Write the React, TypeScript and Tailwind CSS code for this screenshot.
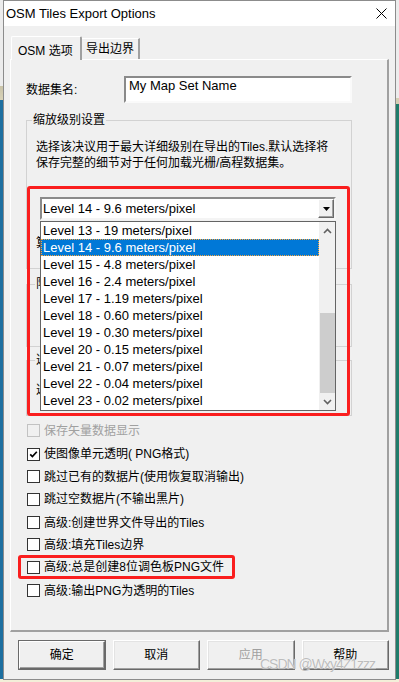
import React from "react";

const F = "font-['Liberation_Sans','Noto_Sans_CJK_SC',sans-serif]";

const levels = [
  "Level 13 - 19 meters/pixel",
  "Level 14 - 9.6 meters/pixel",
  "Level 15 - 4.8 meters/pixel",
  "Level 16 - 2.4 meters/pixel",
  "Level 17 - 1.19 meters/pixel",
  "Level 18 - 0.60 meters/pixel",
  "Level 19 - 0.30 meters/pixel",
  "Level 20 - 0.15 meters/pixel",
  "Level 21 - 0.07 meters/pixel",
  "Level 22 - 0.04 meters/pixel",
  "Level 23 - 0.02 meters/pixel",
];

const checks = [
  { label: "保存矢量数据显示", disabled: true, checked: false, h: "h-[23px]" },
  { label: "使图像单元透明( PNG格式)", disabled: false, checked: true, h: "h-[24px]" },
  { label: "跳过已有的数据片(使用恢复取消输出)", disabled: false, checked: false, h: "h-[21px]" },
  { label: "跳过空数据片(不输出黑片)", disabled: false, checked: false, h: "h-[24px]" },
  { label: "高级:创建世界文件导出的Tiles", disabled: false, checked: false, h: "h-[23px]" },
  { label: "高级:填充Tiles边界", disabled: false, checked: false, h: "h-[21px]" },
  { label: "高级:总是创建8位调色板PNG文件", disabled: false, checked: false, h: "h-[24px]" },
  { label: "高级:输出PNG为透明的Tiles", disabled: false, checked: false, h: "h-[23px]" },
];

function Chevron({ up }: { up: boolean }) {
  return (
    <svg width="9" height="6" viewBox="0 0 9 6">
      <polyline
        points={up ? "1,5 4.5,1.5 8,5" : "1,1 4.5,4.5 8,1"}
        fill="none"
        stroke="#606060"
        strokeWidth="1.6"
      />
    </svg>
  );
}

function Sliver({ ch }: { ch: string }) {
  return (
    <span className="block w-[4px] h-[16px] overflow-hidden text-[12px] leading-[16px] text-black">{ch}</span>
  );
}

function Button({ label, isDefault, disabled }: { label: string; isDefault?: boolean; disabled?: boolean }) {
  if (isDefault) {
    return (
      <div className="w-[88px] h-[30px] border border-[#6a6a6a]">
        <div className="w-full h-full border border-t-white border-l-white border-r-[#696969] border-b-[#696969] bg-[#f0f0f0] flex items-center justify-center shadow-[inset_-1px_-1px_0_#a0a0a0]">
          <span className="text-[12px] leading-[16px] text-black">{label}</span>
        </div>
      </div>
    );
  }
  return (
    <div className="w-[88px] h-[30px] border border-t-white border-l-white border-r-[#696969] border-b-[#696969] bg-[#f0f0f0] flex items-center justify-center shadow-[inset_-1px_-1px_0_#a0a0a0,inset_1px_1px_0_#e3e3e3]">
      <span className={"text-[12px] leading-[16px] " + (disabled ? "text-[#a0a0a0]" : "text-black")}>{label}</span>
    </div>
  );
}

export default function App() {
  return (
    <div className={"w-[399px] h-[682px] flex bg-[#f3efd9] " + F}>
      <div className="w-[3px] h-full bg-[linear-gradient(to_bottom,#ececec_0px,#ececec_86px,#c9c3a8_86px,#d8d2b8_100px,#1d6fa0_100px,#1d6fa0_679px,#f3efd9_679px)]" />
      <div className="relative w-[393px] h-[680px] border border-[#8c8c8c] bg-[#f0f0f0] flex flex-col">
        {/* title bar */}
        <div className="h-[25px] bg-white flex items-center justify-between pl-[2px] pr-[8px]">
          <span className="text-[13px] leading-[16px] text-black">OSM Tiles Export Options</span>
          <svg width="11" height="11" viewBox="0 0 11 11">
            <line x1="0.5" y1="0.5" x2="10.5" y2="10.5" stroke="#000" strokeWidth="1" />
            <line x1="10.5" y1="0.5" x2="0.5" y2="10.5" stroke="#000" strokeWidth="1" />
          </svg>
        </div>

        {/* body */}
        <div className="flex-1 flex flex-col pt-[10px] px-[6px]">
          {/* tabs */}
          <div className="h-[23px] flex items-start pl-[1px]">
            <div className="relative z-10 w-[71px] h-[24px] bg-[#f0f0f0] border-t border-l border-r-2 border-t-white border-l-white border-r-[#a0a0a0] rounded-t-[2px] pl-[6px] pt-[1px]">
              <span className="text-[12px] leading-[16px] text-black whitespace-nowrap">OSM 选项</span>
            </div>
            <div className="mt-[2px] w-[58px] h-[21px] bg-[#f0f0f0] border-t border-r-2 border-t-white border-r-[#a0a0a0] flex justify-center pt-[2px]">
              <span className="text-[12px] leading-[16px] text-black whitespace-nowrap">导出边界</span>
            </div>
          </div>

          {/* panel */}
          <div className="relative w-[379px] h-[573px] border-t border-l border-r-2 border-b-2 border-t-white border-l-white border-r-[#a0a0a0] border-b-[#a0a0a0] flex flex-col">
            {/* row: dataset name */}
            <div className="mt-[16px] ml-[15px] flex items-center h-[27px]">
              <span className="w-[98px] text-[12px] leading-[16px] text-black">数据集名:</span>
              <div className="w-[228px] h-[27px] bg-white border-2 border-t-[#8a8a8a] border-l-[#8a8a8a] border-r-[#fafafa] border-b-[#fafafa] pl-[3px]">
                <span className="block text-[13px] leading-[15px] text-black">My Map Set Name</span>
              </div>
            </div>

            {/* group 1 */}
            <fieldset className="mt-[9px] ml-[15px] w-[326px] border border-[#d2d2d2] pb-[17px]">
              <legend className="ml-[5px] px-[1px] text-[12px] leading-[16px] text-black">缩放级别设置</legend>
              <div className="mt-[11px] pl-[9px] text-[12px] leading-[16px] text-black whitespace-nowrap">
                选择该决议用于最大详细级别在导出的Tiles.默认选择将
                <br />
                保存完整的细节对于任何加载光栅/高程数据集。
              </div>
              <div className="mt-[26px] ml-[13px] w-[296px] h-[23px] bg-white border-2 border-t-[#8a8a8a] border-l-[#8a8a8a] border-r-[#f4f4f4] border-b-[#f4f4f4] flex items-center">
                <span className="flex-1 pl-[1px] text-[13px] leading-[16px] text-black">Level 14 - 9.6 meters/pixel</span>
                <div className="w-[16px] h-[19px] bg-[#f0f0f0] border border-t-white border-l-white border-r-[#696969] border-b-[#696969] shadow-[inset_-1px_-1px_0_#a0a0a0] flex items-center justify-center">
                  <svg width="7" height="4" viewBox="0 0 7 4">
                    <polygon points="0,0 7,0 3.5,4" fill="#000" />
                  </svg>
                </div>
              </div>
              <div className="mt-[15px] pl-[9px] h-[16px]">
                <Sliver ch="算" />
              </div>
            </fieldset>

            {/* group 2 (mostly hidden behind list) */}
            <fieldset className="mt-[7px] ml-[15px] w-[326px] h-[71px] border border-[#d2d2d2]">
              <legend className="ml-[8px] px-[1px]">
                <Sliver ch="限" />
              </legend>
            </fieldset>

            {/* group 3 (mostly hidden behind list) */}
            <fieldset className="mt-[5px] ml-[15px] w-[326px] h-[64px] border border-[#d2d2d2]">
              <legend className="ml-[8px] px-[1px]">
                <Sliver ch="选" />
              </legend>
              <div className="mt-[14px] pl-[9px] h-[16px]">
                <Sliver ch="选" />
              </div>
            </fieldset>

            {/* checkboxes */}
            <div className="mt-[3px] ml-[16px] flex flex-col">
              {checks.map((c) => (
                <div key={c.label} className={"flex items-center " + c.h}>
                  <div
                    className={
                      "w-[13px] h-[13px] border flex items-center justify-center " +
                      (c.disabled ? "border-[#c2c2c2] bg-[#f0f0f0]" : "border-[#333333] bg-white")
                    }
                  >
                    {c.checked && (
                      <svg width="9" height="9" viewBox="0 0 9 9">
                        <polyline points="1.2,4.4 3.4,6.6 7.8,1.8" fill="none" stroke="#000" strokeWidth="1.7" />
                      </svg>
                    )}
                  </div>
                  <span
                    className={
                      "ml-[4px] text-[12px] leading-[16px] whitespace-nowrap " +
                      (c.disabled ? "text-[#a0a0a0]" : "text-black")
                    }
                  >
                    {c.label}
                  </span>
                </div>
              ))}
            </div>

            {/* dropdown list overlay */}
            <div className="absolute left-[29px] top-[161px] w-[296px] h-[190px] border border-[#646464] bg-white flex">
              <div className="flex-1 flex flex-col">
                {levels.map((l, i) =>
                  i === 1 ? (
                    <div
                      key={l}
                      className="h-[17px] bg-[#0078d7] border border-dotted border-[#f7a640] pl-[1px] text-[13px] leading-[15px] text-white whitespace-nowrap"
                    >
                      {l}
                    </div>
                  ) : (
                    <div key={l} className="h-[17px] pl-[2px] text-[13px] leading-[17px] text-black whitespace-nowrap">
                      {l}
                    </div>
                  )
                )}
              </div>
              <div className="w-[16px] h-full bg-[#f0f0f0] flex flex-col">
                <div className="h-[17px] flex items-center justify-center">
                  <Chevron up={true} />
                </div>
                <div className="h-[74px]" />
                <div className="h-[80px] ml-px bg-[#cdcdcd]" />
                <div className="h-[17px] flex items-center justify-center">
                  <Chevron up={false} />
                </div>
              </div>
            </div>

            {/* red highlight boxes */}
            <div className="absolute left-[16px] top-[126px] w-[323px] h-[230px] border-[3px] border-[#fa1e1e] rounded-[3px]" />
            <div className="absolute left-[7px] top-[495px] w-[217px] h-[24px] border-[3px] border-[#fa1e1e] rounded-[3px]" />
          </div>

          {/* buttons */}
          <div className="mt-[8px] ml-[8px] flex gap-[7px]">
            <Button label="确定" isDefault />
            <Button label="取消" />
            <Button label="应用" disabled />
            <Button label="帮助" />
          </div>
        </div>

        {/* watermark */}
        <div className="absolute left-[256px] top-[655px] text-[14px] leading-[16px] tracking-[-1px] font-['Liberation_Sans',sans-serif] text-[#bdbdbd] [text-shadow:0_0_1px_#ffffff] whitespace-nowrap">
          CSDN @Wxy4Z1zzz
        </div>
      </div>
      <div className="w-[3px] h-full bg-[linear-gradient(to_bottom,#ececec_0px,#ececec_98px,#d4cfb4_98px,#d4cfb4_104px,#1f7c6a_104px,#1f7c6a_679px,#f3efd9_679px)]" />
    </div>
  );
}
